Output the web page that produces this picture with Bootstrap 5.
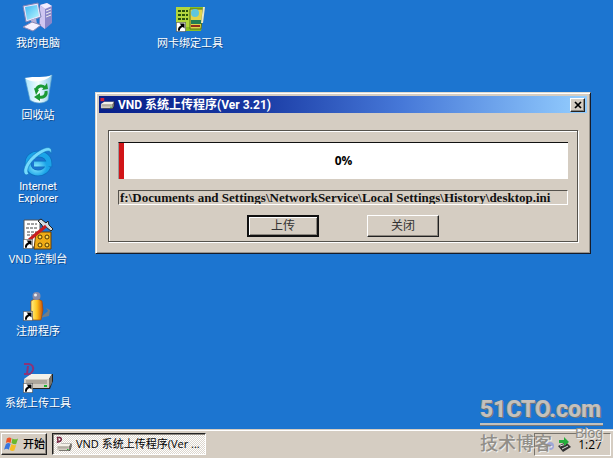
<!DOCTYPE html>
<html lang="zh-CN">
<head>
<meta charset="utf-8">
<meta name="viewport" content="width=device-width, initial-scale=1">
<title>VND 系统上传程序</title>
<link rel="stylesheet" href="https://cdn.jsdelivr.net/npm/bootstrap@5.3.0/dist/css/bootstrap.min.css">
<style>
body{font-family:"Open Sans","Noto Sans CJK SC",sans-serif;font-size:12px;line-height:12px;background:#1c75d0;color:#000}
.desktop{min-height:0;height:0}
.shortcut-col{width:76px}
.shortcut-tools{margin-left:76px}
.shortcut{height:72px;color:#fff;font-size:11px;line-height:12px;padding-top:2px;text-align:center;text-decoration:none;white-space:nowrap;text-shadow:1px 1px 0 #124d91}
.shortcut:hover{color:#fff}
.shortcut svg{width:32px;height:32px;margin-bottom:3px;flex:none}
.shortcut-latin{font-family:Roboto,sans-serif}
.dialog-win{position:absolute;top:92px;left:95px;right:22px;background:#d5cdc2;border:1px solid;border-color:#dfdbd2 #151c2a #151c2a #dfdbd2;box-shadow:inset 1px 1px #fff,inset -1px -1px #99948c;padding:3px 3px 11px}
.titlebar{height:17px;background:linear-gradient(90deg,#08208a,#1636a0 30%,#4678d8 62%,#94ceff);color:#fff;padding:0 2px 0 1px;gap:3px;font-family:Roboto,"Noto Sans CJK SC",sans-serif;font-weight:700}
.titlebar h1{font:inherit;margin:0}
.close-btn{width:15px;height:14px;background:#d5cdc2}
.raised{border:1px solid;border-color:#fff #222 #222 #fff;box-shadow:inset -1px -1px #8b867e;background:#d5cdc2;color:#000}
.group-box{margin:17px 9px 0;border:1px solid #55524c;box-shadow:1px 1px #fff,inset 1px 1px #fff;padding:11px 9px 4px}
.meter{height:37px;background:#fff;border-radius:0;border-top:1px solid #111;border-left:1px solid #999;position:relative}
.meter-fill{width:5px;background:#d11518}
.meter-text{position:absolute;inset:0;font-size:12px;font-weight:700;color:#000}
.path-box{display:block;width:100%;height:15px;margin-top:11px;padding:0 0 0 1px;background:#d5cdc2;border:1px solid;border-color:#55524c #fff #fff #55524c;border-radius:0;font:700 13px/13px "Liberation Serif",serif;color:#111;outline:0}
.actions{gap:48px;padding-top:10px}
.act{width:72px;height:22px;font-size:12px;line-height:12px;color:#333;border-radius:0;padding:0}
.act-default{border:2px solid #111;box-shadow:inset 1px 1px #fff,inset -1px -1px #8b867e}
.taskbar{flex:none;height:29px;background:#d5cdc2;border-top:1px solid #d5cdc2;box-shadow:inset 0 1px #fff;padding:1px 2px 1px 1px;gap:5px}
.start-btn{width:46px;height:22px;font-size:11px;font-weight:500;padding:0 2px}
.task-btn{width:154px;height:22px;font-size:11px;padding:0 3px;border:1px solid;border-color:#222 #fff #fff #222;box-shadow:inset 1px 1px #8b867e;background:repeating-conic-gradient(#fff 0 25%,#dcd6cd 0 50%) 0 0/2px 2px}
.tray{width:77px;height:23px;border:1px solid;border-color:#77736b #fff #fff #77736b;font-size:12px;padding:2px 8px 0 4px}
.watermark{position:absolute;right:10px;bottom:4px;width:123px;color:#c3c1bd;font-family:Roboto,sans-serif;font-weight:700;pointer-events:none;z-index:3;text-shadow:1px 1px #77777a,-1px 0 #8e8f92}
.wm-name{font-size:23px;line-height:26px;border-bottom:2px solid #c3c1bd;box-shadow:0 1px #77777a}
.wm-blog{font-size:18px;line-height:24px;font-family:"Noto Sans CJK SC",sans-serif;font-weight:500;color:#918e88;text-shadow:1px 1px #eee}
.wm-blog span{padding-top:5px}
.wm-blog small{font:400 14px/16px "Liberation Sans",sans-serif}
</style>
<script src="https://cdn.jsdelivr.net/npm/bootstrap@5.3.0/dist/js/bootstrap.bundle.min.js"></script>
</head>
<body class="d-flex flex-column min-vh-100 overflow-hidden position-relative">
<svg width="0" height="0" class="position-absolute" aria-hidden="true">
<defs>
<linearGradient id="screen" x2="1" y2="1"><stop stop-color="#3fb6f2"/><stop offset="1" stop-color="#baf8ff"/></linearGradient>
<linearGradient id="bin" x2="1"><stop stop-color="#a9e4fb"/><stop offset=".5" stop-color="#f2fdff"/><stop offset="1" stop-color="#8ac9ea"/></linearGradient>
<linearGradient id="pawn" x2="1"><stop stop-color="#fff08a"/><stop offset=".5" stop-color="#ffc31c"/><stop offset="1" stop-color="#c64a08"/></linearGradient>
<radialGradient id="globe" cx=".4" cy=".7"><stop stop-color="#8cecff"/><stop offset="1" stop-color="#1ba4e8"/></radialGradient>
<symbol id="arrow" viewBox="0 0 10 10"><path fill="#fff" stroke="#222" stroke-width=".6" d="M.3.3h9.4v9.4H.3z"/><path d="M3.5 1.5H8.500V6.500L6.900 5C5 5.500 4 6.500 3.800 8.800H2C1.800 6 3 4.300 5.200 3.300z"/></symbol>
<symbol id="drive" viewBox="0 0 32 32"><path d="M6 16l5-4h20v7l-3 8H6z" fill="#222"/><path d="M2 17l7-5h21l-3 5z" fill="#f4f1e9"/><path d="M2 17h25v9H2z" fill="#d3cdc2"/><path d="M27 17l3-5v9l-3 5z" fill="#77736b"/><path d="M4 19h21M4 21h21" stroke="#878178"/><path d="M22 23h3v2h-3z" fill="#19b42d"/></symbol>
</defs></svg>

<main class="desktop d-flex flex-grow-1 align-items-start">
<nav class="shortcut-col d-flex flex-column" aria-label="桌面">
<a href="#" class="shortcut d-flex flex-column align-items-center"><svg viewBox="0 0 32 32" aria-hidden="true"><path d="M18 3l7-2 5 3v17l-7 6-6-4z" fill="#8a86c9"/><path d="M18 3l7-2 5 3-7 3z" fill="#f2edff"/><path d="M18 3l5 4v20l-5-4z" fill="#cfc6f1"/><path d="M24 9l5-2M24 12l5-2M24 15l5-2" stroke="#eee"/><path d="M1 4l15-3 3 14-15 5z" fill="#eae5fb" stroke="#7c82b5"/><path d="M3 5l12-2 2 11-12 4z" fill="url(#screen)"/><path d="M9 18l5-2 1 6-5 1z" fill="#b6afd8"/><path d="M1 25l9-5 9 3-8 6z" fill="#f4f0ff" stroke="#8c88b6"/></svg><span>我的电脑</span></a>
<a href="#" class="shortcut d-flex flex-column align-items-center"><svg viewBox="0 0 32 32" aria-hidden="true"><path d="M3 4l14 2L30 1l-4 25c-4 4-13 4-18 0z" fill="url(#bin)" stroke="#5aa2cb" stroke-width=".7"/><path d="M3 4c5 5 19 5 27-3-6 3-18 1-27 3z" fill="#fff"/><g fill="none" stroke="#1b9a35" stroke-width="3"><path d="M14 16c2-5 7-5 9-2M24 17c1 5-3 7-7 6"/></g><path d="M20 16l6-1-1-6zM18 19l-6 4 6 4zM12 14l5 2-3 5z" fill="#1b9a35"/></svg><span>回收站</span></a>
<a href="#" class="shortcut shortcut-latin d-flex flex-column align-items-center"><svg viewBox="0 0 32 32" aria-hidden="true"><path d="M26 20.500C24 25 20 27 16 27 10 27 6 23 6 17.500S10 8 16.500 8 27 12 27 18H12" fill="none" stroke="#0d6ebd" stroke-width="6.500"/><path d="M26 20.500C24 25 20 27 16 27 10 27 6 23 6 17.500S10 8 16.500 8 27 12 27 18H12" fill="none" stroke="url(#globe)" stroke-width="5"/><path d="M4 29C-2 26 5 12 17 5c8-5 14-5 12 3 0-4-4-4-10 0C9 14 3 24 7 28z" fill="#75dafc" stroke="#0d72bd" stroke-width=".6"/></svg><span>Internet<br>Explorer</span></a>
<a href="#" class="shortcut d-flex flex-column align-items-center"><svg viewBox="0 0 32 32" aria-hidden="true"><path d="M2 2h16v27H2z" fill="#fff" stroke="#555"/><path d="M5 6h10M4 10h11M5 14h9M5 17h7" stroke="#444" stroke-dasharray="3 1"/><path d="M14 14h15v17H12z" fill="#efac16" stroke="#6b3f05"/><g fill="#ffd94e" stroke="#513400"><circle cx="18" cy="19" r="2"/><circle cx="25" cy="19" r="2"/><circle cx="18" cy="27" r="2"/><circle cx="25" cy="27" r="2"/></g><path d="M16 3l3-2 5 4 2-2 1 4 4 4-2 2-5-4-3 2-1-4z" fill="#d4dde1" stroke="#222"/><path d="M24 8L7 22" stroke="#c91c20" stroke-width="3"/><use href="#arrow" x="1" y="21" width="10" height="10"/></svg><span>VND 控制台</span></a>
<a href="#" class="shortcut d-flex flex-column align-items-center"><svg viewBox="0 0 32 32" aria-hidden="true"><path d="M18 28l8-7-2-3 4 2-1 6z" fill="#727d85"/><path d="M9 11q5-4 11 0l1 9-2 10h-8L9 20z" fill="url(#pawn)" stroke="#a24c0a" stroke-width=".7"/><circle cx="14.500" cy="6" r="4" fill="#888ba7"/><circle cx="13.500" cy="5" r="1.500" fill="#eee"/><use href="#arrow" x="1" y="21" width="10" height="10"/></svg><span>注册程序</span></a>
<a href="#" class="shortcut d-flex flex-column align-items-center"><svg viewBox="0 0 32 32" aria-hidden="true"><use href="#drive" width="32" height="32"/><path d="M2 2h5q5 1 4 6-2 5-6 4l1-8M2 12h4" fill="none" stroke="#8b3478" stroke-width="2"/><use href="#arrow" x="1" y="21" width="10" height="10"/></svg><span>系统上传工具</span></a>
</nav>
<nav class="shortcut-col shortcut-tools" aria-label="工具"><a href="#" class="shortcut d-flex flex-column align-items-center"><svg viewBox="0 0 32 32" aria-hidden="true"><path d="M2 5h28l-3 24H2z" fill="#8abe20"/><path d="M2 5h14v20H2z" fill="#b2d63e"/><path d="M4 9h10M4 13h10M4 17h10" stroke="#28520d" stroke-width="2" stroke-dasharray="3 1"/><path d="M16 7h13l-2 20H16z" fill="#e2d44b" stroke="#55731d"/><circle cx="21" cy="11" r="4" fill="#5fc6df"/><path d="M17 18h10v4H17z" fill="#247e54"/><path d="M17 24h9" stroke="#912e1d" stroke-width="2"/><path d="M30 5l-2 16" stroke="#e9e7c4" stroke-width="2"/><use href="#arrow" x="2" y="20" width="10" height="10"/></svg><span>网卡绑定工具</span></a></nav>
</main>

<section class="dialog-win" role="dialog" aria-labelledby="win-title">
<header class="titlebar d-flex align-items-center">
<svg width="15" height="15" viewBox="0 4 32 28" aria-hidden="true"><use href="#drive" width="32" height="32"/><path d="M1 4h8v7H1z" fill="#cc203a"/></svg>
<h1 id="win-title" class="flex-grow-1 text-nowrap">VND 系统上传程序(Ver 3.21)</h1>
<button type="button" class="close-btn raised p-0 d-flex align-items-center justify-content-center" aria-label="关闭窗口"><svg width="8" height="8" viewBox="0 0 8 8"><path d="M1 1l6 6M7 1L1 7" stroke="#000" stroke-width="1.700"/></svg></button>
</header>
<form class="group-box">
<div class="progress meter" role="progressbar" aria-label="上传进度" aria-valuenow="0" aria-valuemin="0" aria-valuemax="100"><div class="meter-fill"></div><div class="meter-text d-flex align-items-center justify-content-center">0%</div></div>
<input class="path-box" type="text" readonly aria-label="当前文件" value="f:\Documents and Settings\NetworkService\Local Settings\History\desktop.ini">
<div class="actions d-flex justify-content-center">
<button type="button" class="btn act raised act-default">上传</button>
<button type="button" class="btn act raised">关闭</button>
</div>
</form>
</section>

<footer class="taskbar d-flex align-items-center">
<button type="button" class="start-btn raised d-flex align-items-center gap-1 text-nowrap"><svg width="15" height="16" viewBox="0 0 16 16" aria-hidden="true" class="flex-shrink-0"><path d="M3 2q3-2 5 0L7 7Q4 5 2 7z" fill="#ef5428"/><path d="M9 2q3 2 6 0l-2 6q-2 1-5-1z" fill="#69b82e"/><path d="M2 8q3-2 5 0l-2 6q-2-2-5 0z" fill="#3976df"/><path d="M8 8q3 2 5 1l-2 6q-3 1-5-1z" fill="#f6bd24"/></svg><span>开始</span></button>
<button type="button" class="task-btn d-flex align-items-center gap-1 text-nowrap"><svg width="16" height="17" viewBox="0 0 32 32" aria-hidden="true" class="flex-shrink-0"><use href="#drive" y="2" width="32" height="32"/><path d="M3 2h5q4 2 2 6-2 3-6 2zM3 10v3" fill="none" stroke="#762944" stroke-width="3"/></svg><span>VND 系统上传程序(Ver ...</span></button>
<div class="tray ms-auto d-flex align-items-center justify-content-between"><svg width="32" height="16" viewBox="0 0 32 16" aria-hidden="true"><path d="M7 3q-4 0-4 4M3 7q0 4 5 5" fill="none" stroke="#333"/><circle cx="11" cy="9" r="4" fill="#9da7d7"/><path d="M19 9l8-4 5 5-8 5z" fill="#333"/><path d="M21 9l6-2M23 12l6-3" stroke="#ddd"/><path d="M20 3h5V0l5 5-5 4V6h-5z" fill="#25ad3b"/></svg><time>1:27</time></div>
</footer>
<aside class="watermark"><div class="wm-name text-nowrap">51CTO.com</div><div class="wm-blog d-flex justify-content-between align-items-start text-nowrap"><span>技术博客</span><small>Blog</small></div></aside>
</body>
</html>
